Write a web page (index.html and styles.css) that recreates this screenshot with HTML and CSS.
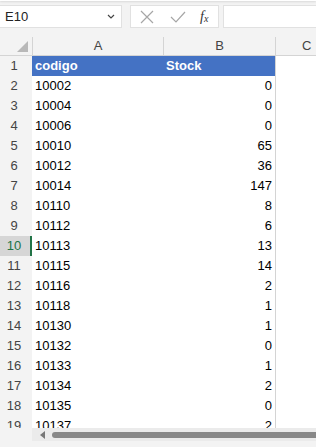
FILE: index.html
```html
<!DOCTYPE html>
<html>
<head>
  <title>Stock</title>
  <link rel="stylesheet" href="styles.css">
</head>
<body>
  <div class="ribbon-edge"></div>
  <div class="formula-bar">
    <div class="name-box">
      <span>E10</span>
      <svg class="chev" width="8" height="5" viewBox="0 0 8 5"><path d="M1 1 L4 4 L7 1" fill="none" stroke="#444" stroke-width="1.2"/></svg>
    </div>
    <div class="fx-box">
      <svg width="14" height="14" viewBox="0 0 14 14"><path d="M1 1 L13 13 M13 1 L1 13" stroke="#a6a6a6" stroke-width="1.2"/></svg>
      <svg width="16" height="12" viewBox="0 0 16 12"><path d="M1 6 L6 11 L15 1" fill="none" stroke="#a6a6a6" stroke-width="1.2"/></svg>
      <span class="fx">f<sub>x</sub></span>
    </div>
    <div class="formula-input"></div>
  </div>

  <div class="sheet">
    <div class="cols">
      <div class="corner"><div class="tri"></div></div>
      <div class="col-h">A</div>
      <div class="col-h">B</div>
      <div class="col-h last">C</div>
    </div>
    <div id="rows"></div>
  </div>

  <div class="hscroll">
    <div class="pad"></div>
    <div class="track">
      <svg width="6" height="8" viewBox="0 0 6 8"><path d="M5 0 L0 4 L5 8 Z" fill="#777"/></svg>
      <div class="thumb"></div>
    </div>
  </div>

  <script>
    const data = [
      ["10002", 0], ["10004", 0], ["10006", 0], ["10010", 65], ["10012", 36],
      ["10014", 147], ["10110", 8], ["10112", 6], ["10113", 13], ["10115", 14],
      ["10116", 2], ["10118", 1], ["10130", 1], ["10132", 0], ["10133", 1],
      ["10134", 2], ["10135", 0], ["10137", 2]
    ];
    const rows = document.getElementById("rows");
    let html = `<div class="row head">
      <div class="rh">1</div><div class="c a">codigo</div><div class="c b">Stock</div><div class="c cc"></div></div>`;
    data.forEach((d, i) => {
      const n = i + 2;
      const sel = n === 10 ? " sel" : "";
      html += `<div class="row"><div class="rh${sel}">${n}</div><div class="c a">${d[0]}</div><div class="c b num">${d[1]}</div><div class="c cc"></div></div>`;
    });
    rows.innerHTML = html;
  </script>
</body>
</html>
```

FILE: styles.css
```css
body {
  margin: 0;
  background: #f3f3f3;
  font-family: "Liberation Sans", Arial, sans-serif;
  font-size: 13px;
  color: #000;
  width: 316px;
  height: 447px;
  overflow: hidden;
}
.ribbon-edge {
  height: 1px;
  background: #fff;
  box-shadow: 0 1px 2px rgba(0,0,0,0.15);
}
.formula-bar {
  display: flex;
  margin-top: 4px;
  height: 23px;
}
.name-box {
  width: 122px;
  background: #fff;
  border: 1px solid #e1e1e1;
  border-left: none;
  box-sizing: border-box;
  display: flex;
  align-items: center;
  justify-content: space-between;
  padding: 0 5px 0 5px;
  color: #222;
}
.chev { margin-right: 1px; }
.fx-box {
  margin-left: 8px;
  width: 89px;
  background: #fff;
  border: 1px solid #e1e1e1;
  box-sizing: border-box;
  display: flex;
  align-items: center;
  gap: 16px;
  padding-left: 9px;
}
.fx {
  font-family: "Liberation Serif", serif;
  font-style: italic;
  font-size: 14px;
  color: #333;
  margin-left: -2px;
}
.fx sub {
  font-size: 10px;
  vertical-align: -1px;
}
.formula-input {
  margin-left: 4px;
  flex: 1;
  background: #fff;
  border: 1px solid #e1e1e1;
  border-right: none;
}
.sheet {
  margin-top: 9px;
  height: 391px;
  overflow: hidden;
}
.cols, .row {
  display: grid;
  grid-template-columns: 32px 131px 112px 1fr;
}
.cols {
  height: 19px;
  color: #444;
  border-bottom: 1px solid #d4d4d4;
  box-sizing: border-box;
}
.col-h {
  text-align: center;
  line-height: 18px;
  border-left: 1px solid #d4d4d4;
  font-size: 13px;
}
.col-h.last { text-align: left; padding-left: 26px; }
.corner {
  position: relative;
}
.tri {
  position: absolute;
  right: 4px;
  bottom: 3px;
  width: 0;
  height: 0;
  border-left: 11px solid transparent;
  border-bottom: 11px solid #b8b8b8;
}
.row {
  height: 20px;
}
.rh {
  background: #f3f3f3;
  color: #444;
  text-align: center;
  line-height: 20px;
  border-bottom: 1px solid #dadada;
  box-sizing: border-box;
  padding-right: 4px;
}
.rh.sel {
  background: #d6d6d6;
  color: #217346;
  border-right: 2px solid #217346;
  padding-right: 2px;
}
.c {
  background: #fff;
  line-height: 20px;
  padding: 0 3px;
  white-space: nowrap;
}
.num { text-align: right; }
.cc {
  border-left: 1px solid #d4d4d4;
  border-bottom: 1px solid #dadada;
  box-sizing: border-box;
}
.row.head .a, .row.head .b {
  background: #4472c4;
  color: #fff;
  font-weight: bold;
}
.hscroll {
  display: flex;
  height: 13px;
}
.pad { width: 32px; }
.track {
  flex: 1;
  background: #ebebeb;
  display: flex;
  align-items: center;
  padding-left: 8px;
  gap: 6px;
}
.thumb {
  flex: 1;
  height: 6px;
  background: #888;
  border-radius: 3px 0 0 3px;
}
```
